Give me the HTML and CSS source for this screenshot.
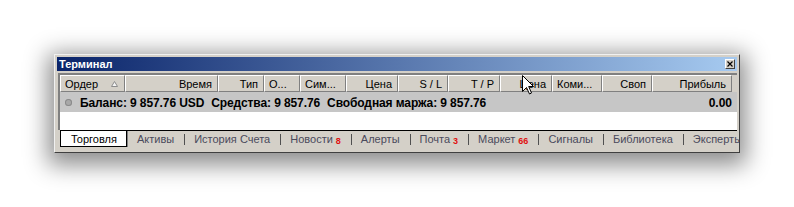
FILE: index.html
```html
<!DOCTYPE html>
<html lang="ru">
<head>
<meta charset="utf-8">
<title>Терминал</title>
<link rel="stylesheet" href="styles.css">
</head>
<body>
<div class="stage">
  <div class="win">
    <div class="title">
      <span class="title-text">Терминал</span>
      <span class="close"><svg width="6" height="6" viewBox="0 0 6 6"><path d="M0.5 0.5 L5.5 5.5 M5.5 0.5 L0.5 5.5" stroke="#000" stroke-width="1.2" fill="none"/></svg></span>
    </div>
    <div class="list">
      <div class="hdr">
        <div class="hc left">Ордер<svg class="sort" width="7" height="6" viewBox="0 0 7 6"><polygon points="3.5,0.5 6.5,5.5 0.5,5.5" fill="#f4f4f4" stroke="#8c8c8c" stroke-width="1"/></svg></div>
        <div class="hc">Время</div>
        <div class="hc">Тип</div>
        <div class="hc left">О...</div>
        <div class="hc left">Сим...</div>
        <div class="hc">Цена</div>
        <div class="hc">S / L</div>
        <div class="hc">T / P</div>
        <div class="hc">Цена</div>
        <div class="hc left">Коми...</div>
        <div class="hc">Своп</div>
        <div class="hc">Прибыль</div>
      </div>
      <div class="bal">
        <span class="dot"></span>
        <span class="bal-item">Баланс: 9 857.76 USD</span>
        <span class="bal-item">Средства: 9 857.76</span>
        <span class="bal-item">Свободная маржа: 9 857.76</span>
        <span class="bal-total">0.00</span>
      </div>
      <div class="empty"></div>
    </div>
    <div class="tabs">
      <span class="tab active">Торговля</span>
      <span class="tab first">Активы</span>
      <span class="sep"></span>
      <span class="tab">История Счета</span>
      <span class="sep"></span>
      <span class="tab">Новости<b class="badge">8</b></span>
      <span class="sep"></span>
      <span class="tab">Алерты</span>
      <span class="sep"></span>
      <span class="tab">Почта<b class="badge">3</b></span>
      <span class="sep"></span>
      <span class="tab">Маркет<b class="badge">66</b></span>
      <span class="sep"></span>
      <span class="tab">Сигналы</span>
      <span class="sep"></span>
      <span class="tab">Библиотека</span>
      <span class="sep"></span>
      <span class="tab">Эксперты</span>
    </div>
  </div>
  <svg class="cursor" width="13" height="20" viewBox="0 0 13 20"><path d="M0.5 0.5 L0.5 16.5 L4.5 12.5 L7.5 19 L9.5 18 L6.7 11.5 L11.5 11.5 Z" fill="#fff" stroke="#000" stroke-width="1" stroke-linejoin="miter"/></svg>
</div>
</body>
</html>
```
FILE: styles.css
```css
html, body {
  margin: 0;
  background: #fff;
}
body {
  font-family: "Liberation Sans", Arial, sans-serif;
  font-size: 11px;
  color: #000;
}
.stage {
  position: relative;
  width: 794px;
  height: 207px;
  box-sizing: border-box;
  padding: 54px 0 0 54px;
  overflow: hidden;
}
.win {
  width: 686px;
  height: 99px;
  box-sizing: border-box;
  background: #d4d0c8;
  border: 1px solid;
  border-color: #f0f0f0 #404040 #404040 #f0f0f0;
  padding: 2px;
  box-shadow: 0 6px 22px 6px rgba(0, 0, 0, 0.45);
  display: flex;
  flex-direction: column;
  overflow: hidden;
}
.title {
  height: 14px;
  flex: none;
  background: linear-gradient(to right, #0a246a, #a6caf0);
  display: flex;
  align-items: center;
  justify-content: space-between;
  padding: 0 2px;
  color: #fff;
  font-weight: bold;
}
.title-text {
  line-height: 14px;
}
.close {
  width: 10px;
  height: 10px;
  box-sizing: border-box;
  background: #d4d0c8;
  border: 1px solid;
  border-color: #fff #404040 #404040 #fff;
  display: flex;
  align-items: center;
  justify-content: center;
}
.list {
  flex: none;
  margin: 2px 0 0 1px;
  height: 57px;
  box-sizing: border-box;
  border-top: 2px solid #808080;
  border-left: 2px solid #808080;
  background: #fff;
  display: flex;
  flex-direction: column;
}
.hdr {
  height: 17px;
  flex: none;
  background: #d4d0c8;
  display: grid;
  grid-template-columns: 65px 93px 46px 36px 46px 52px 50px 52px 52px 50px 50px 80px;
}
.hc {
  box-sizing: border-box;
  border: 1px solid;
  border-color: #fff #808080 #808080 #fff;
  display: flex;
  align-items: center;
  justify-content: flex-end;
  padding: 0 5px 0 4px;
  white-space: nowrap;
  overflow: hidden;
}
.hc.left {
  justify-content: flex-start;
}
.sort {
  margin-left: 13px;
}
.bal {
  height: 20px;
  flex: none;
  background: #c6c6c6;
  display: flex;
  align-items: center;
  padding: 1px 5px 0 5px;
  box-sizing: border-box;
  font-weight: bold;
  font-size: 12px;
  white-space: nowrap;
}
.dot {
  width: 7px;
  height: 7px;
  border-radius: 50%;
  background: #a8a8a8;
  box-shadow: inset 0 0 0 1px #8a8a8a;
  margin: 0 8px 1px 0;
}
.bal-item {
  margin-right: 7px;
  letter-spacing: -0.1px;
}
.bal-total {
  margin-left: auto;
}
.empty {
  flex: 1;
}
.tabs {
  flex: 1;
  margin-left: 3px;
  border-top: 1px solid #000;
  display: flex;
  align-items: flex-start;
  white-space: nowrap;
  color: #4a4a5c;
}
.tab {
  height: 16px;
  display: flex;
  align-items: center;
  padding: 0 10px 0 9px;
  flex: none;
}
.tab.first {
  padding-left: 10px;
}
.tab.active {
  box-sizing: border-box;
  background: #fff;
  color: #000;
  border: 1px solid #000;
  border-top: none;
  padding: 0 9px 0 10px;
  box-shadow: 1px 0 0 #808080;
}
.sep {
  flex: none;
  width: 1px;
  height: 11px;
  margin-top: 3px;
  background: #505050;
}
.badge {
  color: #e01010;
  font-size: 9px;
  margin: 3px 0 0 3px;
}
.cursor {
  position: absolute;
  left: 522px;
  top: 75px;
}
```
